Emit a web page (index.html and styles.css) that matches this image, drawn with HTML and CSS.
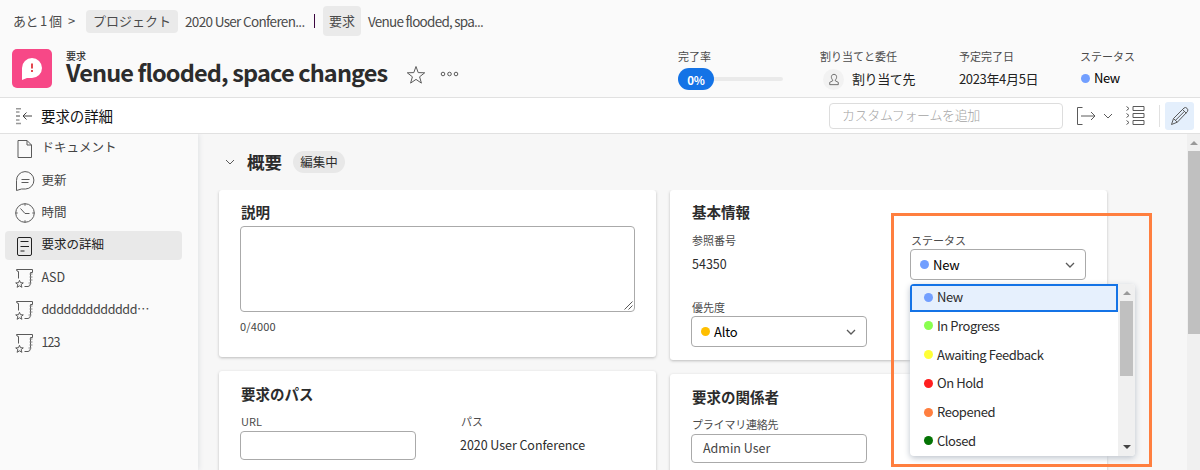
FILE: index.html
```
<!DOCTYPE html>
<html lang="ja">
<head>
<meta charset="utf-8">
<title>Venue flooded, space changes</title>
<link rel="stylesheet" href="styles.css">
</head>
<body>
<svg class="defs" width="0" height="0">
  <symbol id="form" viewBox="0 0 20 20"><path d="M3.500 10.500V3.500Q1.500 3.500 1.500 1.500H17.500V4.500H15.500V15.500Q15 18.500 13 18.500H9.500" /><path class="edge" d="M14.500 6h3M14.500 9h3M14.500 12h3M13.500 15h3"/><path d="M4.500 12.300l1 2.400 2.800.2-2.200 1.700.8 2.700-2.400-1.500-2.400 1.500.8-2.700-2.200-1.700 2.800-.2z"/></symbol>
  <symbol id="chev" viewBox="0 0 12 8"><path d="M2 2l4 4 4-4"/></symbol>
</svg>
<header class="header">
  <nav class="crumbs">
    <span class="more">あと 1 個</span><span class="gt">&gt;</span>
    <span class="chip project">プロジェクト</span><span class="crumb c1">2020 User Conferen...</span>
    <span class="bar"></span><span class="chip request">要求</span><span class="crumb c2">Venue flooded, spa...</span>
  </nav>
  <div class="headline">
    <div class="logo"><svg width="40" height="40" viewBox="0 0 40 40"><path fill="#fff" d="M10 31V19a10 10 0 1 1 10 10h-5z"/><path stroke="#e34850" stroke-width="2" d="M20 14.500v5M20 21v2"/></svg></div>
    <div class="heading"><span class="kind">要求</span><h1>Venue flooded, space changes</h1></div>
    <svg class="line star" width="20" height="20" viewBox="0 0 20 20"><path d="M10 1.500l2.200 6.100 6.500.2-5.100 4 1.800 6.300-5.400-3.700-5.400 3.700 1.800-6.300-5.100-4 6.500-.2z"/></svg>
    <svg class="line dots" width="20" height="8" viewBox="0 0 20 8"><circle cx="3" cy="4" r="1.800"/><circle cx="9.500" cy="4" r="1.800"/><circle cx="16" cy="4" r="1.800"/></svg>
  </div>
  <dl class="facts">
    <div class="fact f1"><dt>完了率</dt><dd class="progress"><b>0%</b><i></i></dd></div>
    <div class="fact f2"><dt>割り当てと委任</dt><dd><span class="avatar"><svg class="line" width="12" height="13" viewBox="0 0 14 15"><path d="M7 1.500c4 0 3.600 5 1.500 6.500v1l3.500 1.800v2.700H2v-2.700L5.500 9V8C3.400 6.500 3 1.500 7 1.500z"/></svg></span>割り当て先</dd></div>
    <div class="fact f3"><dt>予定完了日</dt><dd>2023年4月5日</dd></div>
    <div class="fact f4"><dt>ステータス</dt><dd><span class="dot blue"></span>New</dd></div>
  </dl>
</header>
<div class="toolbar">
  <svg class="collapse" width="18" height="18" viewBox="0 0 18 18"><path stroke="#999" stroke-width="1.500" d="M1 1.700h5M1 5h3.500M1 13h3.500M1 16.500h5"/><path stroke="#444" d="M1 9h4M8 9h9M11.500 5.500L8 9l3.500 3.500"/></svg>
  <h2>要求の詳細</h2>
  <div class="add">カスタムフォームを追加</div>
  <svg class="line export" width="22" height="20" viewBox="0 0 22 20"><path d="M6.500 1.500h-5v17h5M5 10h14M15 6l4 4-4 4"/></svg>
  <svg class="line chev1" width="12" height="8"><use href="#chev"/></svg>
  <svg class="line rows" width="20" height="20" viewBox="0 0 20 20"><path d="M8 .5h11v4H8zM8 7.500h11v4H8zM8 14.500h11v4H8z"/><path d="M1.500.5l2.500 2-2.500 2M1.500 7.500l2.500 2-2.500 2M1.500 14.500l2.500 2-2.500 2"/></svg>
  <span class="rule"></span>
  <span class="edit"><svg class="line" width="20" height="20" viewBox="0 0 20 20"><path d="M1.500 18.500l2-6L14 2q1.500-1.200 3 .3t.5 3.200L7.300 16.200zM3.500 12.500l3.800 3.700M12.500 3.500l3.800 3.700M5.500 14.300l9-9"/></svg></span>
</div>
<div class="body">
  <aside class="side">
    <a class="item"><svg class="line" width="20" height="20" viewBox="0 0 20 20"><path d="M3 1.500h9l4.500 4.500v12.500h-13.500zM12 1.500v4.500h4.500"/></svg><span class="s1">ドキュメント</span></a>
    <a class="item"><svg class="line" width="20" height="20" viewBox="0 0 20 20"><path d="M1.500 19.500V9.500a8.700 8.700 0 1 1 9 8.500H6.500zM6.500 8.500h8M6.500 11.500h7"/></svg><span>更新</span></a>
    <a class="item"><svg class="line" width="20" height="20" viewBox="0 0 20 20"><circle cx="10" cy="10" r="9.300"/><path d="M5.500 5.500l4.500 5h4.500M10 .7v2M10 17.300v2M.7 10h2M17.300 10h2"/></svg><span>時間</span></a>
    <a class="item active"><svg class="line" width="20" height="20" viewBox="0 0 20 20"><rect x="2.500" y="1.500" width="14" height="18" rx="1.500"/><path d="M5.500 5.500h8M5.500 10.500h8.500M5.500 15h4"/></svg><span>要求の詳細</span></a>
    <a class="item"><svg class="line" width="20" height="20"><use href="#form"/></svg><span>ASD</span></a>
    <a class="item"><svg class="line" width="20" height="20"><use href="#form"/></svg><span class="s6">ddddddddddddd⋯</span></a>
    <a class="item"><svg class="line" width="20" height="20"><use href="#form"/></svg><span class="s7">123</span></a>
  </aside>
  <main class="main">
    <div class="section"><svg class="line" width="12" height="8"><use href="#chev"/></svg><h2>概要</h2><span class="badge">編集中</span></div>
    <div class="columns">
      <div class="column">
        <section class="card desc">
          <h3>説明</h3>
          <div class="area"><svg class="line" width="9" height="9" viewBox="0 0 9 9"><path d="M.5 8.500l8-8M4.500 8.500l4-4"/></svg></div>
          <div class="count">0/4000</div>
        </section>
        <section class="card path">
          <h3>要求のパス</h3>
          <div class="pair">
            <div class="field"><label>URL</label><div class="input"></div></div>
            <div class="field"><label>パス</label><div class="value">2020 User Conference</div></div>
          </div>
        </section>
      </div>
      <div class="column">
        <section class="card basic">
          <h3>基本情報</h3>
          <div class="pair">
            <div class="field"><label>参照番号</label><div class="value">54350</div>
              <label class="prio">優先度</label><div class="input select"><span class="dot amber"></span>Alto<svg class="line" width="12" height="8"><use href="#chev"/></svg></div></div>
            <div class="field status"><label>ステータス</label><div class="input select"><span class="dot blue"></span>New<svg class="line" width="12" height="8"><use href="#chev"/></svg></div></div>
          </div>
        </section>
        <section class="card people">
          <h3>要求の関係者</h3>
          <div class="field"><label>プライマリ連絡先</label><div class="input admin">Admin User</div></div>
        </section>
      </div>
    </div>
  </main>
  <div class="scroll"><i class="up"></i><div class="thumb"></div></div>
</div>
<div class="menu">
  <ul>
    <li class="sel"><span class="dot blue"></span>New</li>
    <li><span class="dot green"></span>In Progress</li>
    <li><span class="dot yellow"></span>Awaiting Feedback</li>
    <li><span class="dot red"></span>On Hold</li>
    <li><span class="dot orange"></span>Reopened</li>
    <li><span class="dot dark"></span>Closed</li>
  </ul>
  <div class="menubar"><i class="up"></i><div class="thumb"></div><i class="down"></i></div>
</div>
<div class="callout"></div>
</body>
</html>
```
FILE: styles.css
```
* { box-sizing: border-box; }
body { margin: 0; width: 1200px; height: 470px; overflow: hidden; position: relative; background: #f7f7f7; color: #2c2c2c; font: 14px/20px "Noto Sans CJK JP", sans-serif; white-space: nowrap; }
h1, h2, h3, dl, dd, ul { margin: 0; padding: 0; }
svg { display: block; flex: none; }
.defs { position: absolute; }
.line { fill: none; stroke: #5a5a5a; stroke-width: 1; overflow: visible; }
.edge { stroke: #888; }
.dot { width: 9px; height: 9px; border-radius: 50%; flex: none; }
.blue { background: #729fff; }
.amber { background: #ffbf00; }
.green { background: #8aff4f; }
.yellow { background: #ffff37; }
.red { background: #ff1f1f; }
.orange { background: #ff7f3f; }
.dark { background: #047304; }

.header { height: 98px; background: #fafafa; border-bottom: 1px solid #e1e1e1; display: grid; grid-template: 42px 55px / 678px 1fr; }
.crumbs { grid-column: 1 / 3; display: flex; align-items: center; padding-left: 13px; color: #4b4b4b; font-size: 13px; }
.more { width: 55px; letter-spacing: -.6px; }
.gt { width: 18px; }
.chip { background: #eaeaea; border-radius: 4px; display: flex; align-items: center; justify-content: center; }
.project { width: 92px; height: 23px; margin-right: 7px; }
.request { width: 38px; height: 30px; margin-right: 7px; }
.c1 { width: 129px; font-size: 13.500px; letter-spacing: -.67px; }
.c2 { font-size: 13.500px; letter-spacing: -.75px; }
.bar { width: 1px; height: 14px; background: #3b063f; margin-right: 8px; }
.headline { display: flex; padding-left: 12px; }
.logo { width: 40px; height: 39px; margin-top: 7px; background: #f74887; border-radius: 5px; }
.heading { margin-left: 14px; width: 341px; }
.kind { display: block; font-size: 10px; line-height: 10px; margin-top: 9px; height: 10px; color: #333; font-weight: 500; }
h1 { font-size: 23.500px; line-height: 23px; font-weight: 700; letter-spacing: -.86px; }
.star { margin: 23px 0 0 -1px; }
.dots { margin: 28px 0 0 14px; }
.facts { display: flex; margin-top: 5px; }
.f1 { width: 142px; }
.f2 { width: 139px; }
.f3 { width: 121px; }
.f3 dd { letter-spacing: -.35px; }
dt { font-size: 11px; line-height: 18px; height: 18px; color: #4b4b4b; }
dd { display: flex; align-items: center; height: 28px; font-size: 13px; color: #222; }
.f2 dd { letter-spacing: -.4px; }
.f4 dd { gap: 4px; color: #000; height: 26px; padding-left: 1px; letter-spacing: -.4px; }
.progress b { width: 36px; height: 22px; border-radius: 11px; background: #1473e6; color: #fff; font-size: 11.500px; line-height: 24px; text-align: center; letter-spacing: -.3px; }
.progress i { width: 69px; height: 4px; background: #eaeaea; border-radius: 0 2px 2px 0; }
.avatar { width: 21px; height: 21px; margin: 0 8px 0 3px; border-radius: 50%; background: #f2f2f2; display: flex; align-items: center; justify-content: center; }

.toolbar { height: 36px; background: #fff; border-bottom: 1px solid #e1e1e1; display: flex; align-items: center; padding-left: 15px; }
.collapse { fill: none; }
.toolbar h2 { width: 788px; padding-left: 8px; font-size: 14.500px; letter-spacing: -.1px; font-weight: 400; color: #111; }
.add { width: 234px; height: 26px; margin-left: 8px; border: 1px solid #ddd; border-radius: 4px; padding-left: 12px; font-size: 13px; letter-spacing: -.35px; line-height: 21px; font-weight: 300; color: #a4a4a4; }
.export { margin-left: 13px; }
.chev1 { margin-left: 4px; }
.rows { margin-left: 11px; }
.rule { width: 1px; height: 22px; background: #e1e1e1; margin: 0 5px 0 14px; }
.edit { width: 29px; height: 28px; background: #e4effc; border-radius: 3px; display: flex; align-items: center; justify-content: center; }

.body { display: flex; height: 336px; overflow: hidden; }
.side { width: 198px; background: #fafafa; box-shadow: 1px 0 5px #dfe1e4; padding: 0 16px 0 5px; display: flex; flex-direction: column; gap: 3.400px; }
.item { height: 29px; flex: none; display: flex; align-items: center; padding-left: 10px; gap: 6.500px; border-radius: 4px; color: #444; font-size: 12.500px; }
.item span { line-height: 25px; height: 28px; }
.item .s1 { line-height: 24px; }
.item .s6 { letter-spacing: -.4px; }
.item .s7 { letter-spacing: -.9px; }
.active { background: #e9e9e9; color: #222; }
.active .line { stroke: #222; }
.item.active span { line-height: 24px; }
.main { flex: 1; padding-left: 21px; }
.section { display: flex; align-items: center; height: 56px; padding-left: 5px; }
.section h2 { width: 46px; margin-left: 11px; font-size: 17.500px; }
.badge { width: 52px; height: 22px; border-radius: 11px; background: #e8e8e8; font-size: 12.500px; line-height: 22px; text-align: center; }
.columns { display: flex; gap: 14px; height: 280px; overflow: hidden; margin-left: -4px; padding-left: 4px; }
.column { width: 437px; display: flex; flex-direction: column; gap: 14px; }
.card { flex: none; background: #fff; border-radius: 3px; padding: 12px 21px 0; box-shadow: 0 1px 3px #bbb; }
h3 { font-size: 14.500px; line-height: 22px; padding-left: 1px; }
.desc { height: 167px; padding-top: 11px; }
.path { height: 110px; }
.basic { height: 170px; }
.people { height: 110px; }
.basic h3 { margin-top: -1px; }
.area { width: 395px; height: 86px; margin-top: 3px; border: 1px solid #aaa; border-radius: 4px; display: flex; justify-content: flex-end; align-items: flex-end; padding: 1px; }
.count { font-size: 11px; line-height: 18px; margin-top: 5px; color: #444; letter-spacing: .15px; }
.pair { display: flex; }
.field { width: 220px; flex: none; }
label { display: block; font-size: 11px; line-height: 14px; height: 16px; padding-left: 1px; color: #4b4b4b; }
.path .pair { margin-top: 9px; }
.value { font-size: 12.500px; line-height: 20px; margin-top: 5px; padding-left: 1px; }
.path .value { padding-left: 0; letter-spacing: -.05px; }
.input { width: 176px; height: 29px; border: 1px solid #aaa; border-radius: 4px; background: #fff; margin-top: 1px; }
.basic .pair { margin-top: 10px; }
.prio { margin-top: 26px; line-height: 15px; }
.select { height: 31px; margin-top: 0; display: flex; align-items: center; padding: 0 9px; gap: 4px; font-size: 13px; letter-spacing: -.2px; color: #000; }
.select svg { margin-left: auto; stroke-width: 1.300; }
.status { width: 177px; margin-left: -1px; }
.people h3 { margin-bottom: 9px; }
.people label { letter-spacing: -.2px; }
.admin { padding-left: 11px; font-size: 12.500px; line-height: 25px; color: #444; }
.scroll { width: 13px; background: #f0f0f0; padding-top: 7px; overflow: hidden; }
.up, .down { display: block; width: 0; height: 0; border: 4px solid transparent; margin: 0 auto; }
.up { border-top: 0; border-bottom-color: #999; }
.down { border-bottom: 0; border-top-color: #444; margin-top: auto; }
.scroll .thumb { height: 183px; margin: 6px 0 0 1px; background: #c0c0c0; }

.menu { position: absolute; left: 910px; top: 284px; width: 225px; height: 172px; display: flex; background: #fff; border-radius: 4px; box-shadow: 0 2px 6px #bcc3cc; overflow: hidden; }
.menu ul { width: 208px; height: 172px; list-style: none; }
.menu li { height: 28.750px; display: flex; align-items: center; gap: 4px; padding: 0 0 1px 14px; font-size: 13px; letter-spacing: -.45px; }
.menu .sel { height: 28px; border: 2px solid #1473e6; background: #e6f0fd; padding: 0 0 2px 12px; }
.menubar { width: 17px; background: #f0f0f0; padding: 7px 2px; display: flex; flex-direction: column; }
.menubar .thumb { height: 75px; flex: none; margin-top: 6px; background: #c0c0c0; }
.callout { position: absolute; left: 891px; top: 213px; width: 261px; height: 254px; border: 3px solid #ff7f3f; }
```
